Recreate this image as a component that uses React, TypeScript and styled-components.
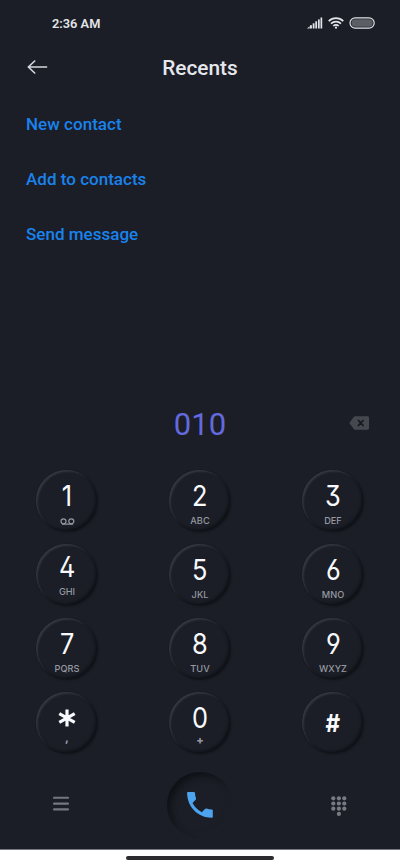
import React from "react";
import styled, { createGlobalStyle } from "styled-components";

const GlobalStyle = createGlobalStyle`
  *, *::before, *::after { box-sizing: border-box; }
  body { margin: 0; background: #1b1e26; }
  button { border: 0; padding: 0; margin: 0; background: none; font: inherit; color: inherit; }
  svg { display: block; }
`;

const Screen = styled.div`
  width: 400px;
  height: 866px;
  overflow: hidden;
  display: flex;
  flex-direction: column;
  background: #1b1e26;
  font-family: Roboto, "Liberation Sans", sans-serif;
`;

const StatusBar = styled.header`
  height: 46px;
  padding: 0 24px 0 52px;
  display: flex;
  justify-content: space-between;
  align-items: center;
  color: #e3e4e9;
`;

const Clock = styled.span`
  font-size: 12.8px;
  font-weight: 600;
  line-height: 16px;
  padding-top: 1px;
`;

const StatusIcons = styled.div`
  display: flex;
  align-items: center;
  gap: 5px;
`;

const TitleBar = styled.div`
  height: 44px;
  display: grid;
  grid-template-columns: 60px 1fr 60px;
  align-items: center;
`;

const BackButton = styled.button`
  padding-left: 27px;
  padding-bottom: 2px;
`;

const Title = styled.h1`
  margin: 0;
  font-size: 20.8px;
  font-weight: 460;
  line-height: 24px;
  text-align: center;
  color: #e6e7ec;
`;

const Actions = styled.nav`
  padding: 7px 26px 0;
  display: flex;
  flex-direction: column;
  align-items: flex-start;
`;

const ActionLink = styled.button`
  height: 54.7px;
  font-size: 17px;
  font-weight: 480;
  letter-spacing: 0.02px;
  color: #1a82ec;
`;

const NumberRow = styled.div`
  margin-top: auto;
  height: 50px;
  display: grid;
  grid-template-columns: 60px 1fr 60px;
  align-items: center;
`;

const DialedNumber = styled.output`
  text-align: center;
  font-size: 31px;
  line-height: 36px;
  color: #6469dd;
`;

const EraseButton = styled.button`
  padding: 0 0 4px 9px;
`;

const Keypad = styled.div`
  margin-top: 20px;
  padding: 0 37px 0 36px;
  display: grid;
  grid-template-columns: repeat(3, 61px);
  grid-auto-rows: 61px;
  justify-content: space-between;
  row-gap: 13px;
`;

const Key = styled.button<{ $lift?: number }>`
  display: flex;
  flex-direction: column;
  align-items: center;
  padding-left: 1px;
  padding-top: ${(p) => 12 - (p.$lift ?? 0)}px;
  border-radius: 50%;
  background: #1b1e26;
  box-shadow:
    inset 2px 2px 2px -0.5px #363940,
    inset -2px -2px 3px -1px #0d0f15,
    1px 1px 2px #101218;
  font-family: Inter, sans-serif;
`;

const Digit = styled.span<{ $bold?: boolean }>`
  height: 28px;
  line-height: 28px;
  font-size: ${(p) => (p.$bold ? 24 : 28.5)}px;
  font-weight: ${(p) => (p.$bold ? 700 : 370)};
  font-feature-settings: "ss01", "cv03", "cv04", "cv09";
  color: #f8f9fc;
  transform: scaleX(${(p) => (p.$bold ? 0.94 : 0.89)});
`;

const Letters = styled.span<{ $shift?: number }>`
  height: 12px;
  margin-top: ${(p) => 5 - (p.$shift ?? 0)}px;
  display: flex;
  align-items: center;
  font-size: ${(p) => (p.$shift ? 11 : 9.2)}px;
  font-weight: ${(p) => (p.$shift ? 800 : 500)};
  line-height: 12px;
  color: #9699a1;
`;

const BottomBar = styled.div`
  height: 96px;
  display: grid;
  grid-template-columns: 122px 1fr 122px;
  place-items: center;
  padding-top: 6px;
`;

const CallButton = styled.button`
  width: 66px;
  height: 66px;
  margin-top: 2px;
  display: grid;
  place-items: center;
  border-radius: 50%;
  box-shadow:
    inset 5px 5px 7px -2px #0e1014,
    inset -3px -3px 7px -3px #1e2129;
`;

const HomeArea = styled.footer`
  height: 17px;
  border-top: 1px solid #77787d;
  background: #fff;
  display: flex;
  justify-content: center;
  align-items: center;
`;

const HomeIndicator = styled.div`
  width: 148px;
  height: 4px;
  border-radius: 2px;
  background: #2b2b2e;
`;

const SignalIcon = () => (
  <svg width="16" height="12" viewBox="0 0 16 12" fill="currentColor">
    <path d="M.1 11.5 2.6 9.3v2.2Z" />
    <rect x="3" y="8.2" width="1.9" height="3.3" />
    <rect x="5.7" y="6.3" width="1.8" height="5.2" />
    <rect x="8.3" y="4.3" width="1.8" height="7.2" />
    <rect x="11" y="2.4" width="1.7" height="9.1" />
    <rect x="13.5" y="0.5" width="1.7" height="11" />
  </svg>
);

const WifiIcon = () => (
  <svg width="16" height="12" viewBox="0 0 16 12" fill="none" stroke="currentColor" strokeWidth="1.7">
    <path d="M0.7 4.1C4.8 .2 11.2 .2 15.3 4.1M3 6.6c2.8-2.7 7.2-2.7 10 0M5.3 9c1.5-1.4 3.9-1.4 5.4 0" />
    <circle cx="8" cy="10.7" r="1.1" fill="currentColor" stroke="none" />
  </svg>
);

const BatteryIcon = () => (
  <svg width="27" height="12" viewBox="0 0 27 12">
    <rect x="1" y="0.8" width="24.2" height="10.4" rx="5.2" fill="none" stroke="currentColor" strokeWidth="1.2" />
    <rect x="2.5" y="2.3" width="21.2" height="7.4" rx="3.7" fill="#5c5e66" />
  </svg>
);

const BackIcon = () => (
  <svg width="21" height="14" viewBox="0 0 21 14" fill="none" stroke="#d7d8de" strokeWidth="1.6" strokeLinecap="round" strokeLinejoin="round">
    <path d="M7.7 1 1.3 7l6.4 6M1.6 7h18" />
  </svg>
);

const EraseIcon = () => (
  <svg width="21" height="14" viewBox="0 0 21 14">
    <path d="M6 .3h12.6q1.4 0 1.4 1.4v10.6q0 1.4-1.4 1.4H6q-.8 0-1.3-.6L.7 7.6q-.4-.6 0-1.2L4.7.9Q5.2.3 6 .3Z" fill="#464850" />
    <path d="m9.4 4.4 4.8 5.2m0-5.2L9.4 9.6" stroke="#171a21" strokeWidth="1.6" strokeLinecap="round" />
  </svg>
);

const VoicemailIcon = () => (
  <svg width="15" height="7" viewBox="0 0 15 7" fill="none" stroke="currentColor" strokeWidth="1.2">
    <circle cx="3.5" cy="3.3" r="2.5" />
    <circle cx="11.3" cy="3.3" r="2.5" />
    <path d="M2 6.1h11" />
  </svg>
);

const MenuIcon = () => (
  <svg width="16" height="16" viewBox="0 0 16 16" stroke="#747780" strokeWidth="2.1" strokeLinecap="round">
    <path d="M1 1.8h14M1 7.6h14M1 13.4h14" />
  </svg>
);

const PhoneIcon = () => (
  <svg width="26" height="26" viewBox="0 0 26 26" fill="#4da4ee">
    <path d="M.1.8Q.1 0 .9 0H7q.8 0 .9.8.2 2.8 1.1 5.4.3.8-.3 1.5L5.5 11q3.2 6 9.3 9.2l3.2-3.2q.6-.6 1.5-.4 2.5.8 5.3 1 1 .1 1 1v6.2q0 1-1 1C11 25.8.1 15 .1.8Z" />
  </svg>
);

const dots: [number, number][] = [
  ...[2.3, 7.5, 12.7].flatMap((y) => [2.3, 7.9, 13.3].map((x): [number, number] => [x, y])),
  [7.9, 17.9],
];

const Dialpad = styled.svg`
  margin-top: 4px;
`;

const DialpadIcon = () => (
  <Dialpad width="16" height="21" viewBox="0 0 16 21" fill="#797b83">
    {dots.map(([x, y]) => (
      <circle key={`${x}-${y}`} cx={x} cy={y} r="2.1" />
    ))}
  </Dialpad>
);

const AsteriskIcon = () => (
  <svg width="18" height="18" viewBox="0 0 18 18" stroke="currentColor" strokeWidth="3.2">
    <path d="M9 .6v16.8M1.3 4.6l15.4 8.8M16.7 4.6 1.3 13.4" />
  </svg>
);

const AsteriskSlot = styled.span`
  height: 27px;
  padding-top: 1px;
  display: flex;
  align-items: center;
  color: #f8f9fc;
`;

const HashSlot = styled.span`
  display: flex;
  padding-top: 6px;
`;

type KeyData = { digit: string; letters?: React.ReactNode; lift?: number; bold?: boolean; shift?: number };

const keys: KeyData[] = [
  { digit: "1", letters: <VoicemailIcon /> },
  { digit: "2", letters: "ABC" },
  { digit: "3", letters: "DEF" },
  { digit: "4", letters: "GHI", lift: 3 },
  { digit: "5", letters: "JKL" },
  { digit: "6", letters: "MNO" },
  { digit: "7", letters: "PQRS" },
  { digit: "8", letters: "TUV" },
  { digit: "9", letters: "WXYZ" },
  { digit: "*", letters: ",", shift: 4 },
  { digit: "0", letters: "+", shift: 3 },
  { digit: "#", bold: true },
];

const KeyFace = ({ digit, bold }: KeyData) => {
  if (digit === "*") {
    return (
      <AsteriskSlot>
        <AsteriskIcon />
      </AsteriskSlot>
    );
  }
  if (bold) {
    return (
      <HashSlot>
        <Digit $bold>{digit}</Digit>
      </HashSlot>
    );
  }
  return <Digit>{digit}</Digit>;
};

export default function App() {
  return (
    <>
      <GlobalStyle />
      <Screen>
        <StatusBar>
          <Clock>2:36 AM</Clock>
          <StatusIcons>
            <SignalIcon />
            <WifiIcon />
            <BatteryIcon />
          </StatusIcons>
        </StatusBar>
        <TitleBar>
          <BackButton aria-label="Back">
            <BackIcon />
          </BackButton>
          <Title>Recents</Title>
        </TitleBar>
        <Actions>
          <ActionLink>New contact</ActionLink>
          <ActionLink>Add to contacts</ActionLink>
          <ActionLink>Send message</ActionLink>
        </Actions>
        <NumberRow>
          <span />
          <DialedNumber>010</DialedNumber>
          <EraseButton aria-label="Delete">
            <EraseIcon />
          </EraseButton>
        </NumberRow>
        <Keypad>
          {keys.map((k) => (
            <Key key={k.digit} $lift={k.lift}>
              <KeyFace {...k} />
              {k.letters && <Letters $shift={k.shift}>{k.letters}</Letters>}
            </Key>
          ))}
        </Keypad>
        <BottomBar>
          <MenuIcon />
          <CallButton aria-label="Call">
            <PhoneIcon />
          </CallButton>
          <DialpadIcon />
        </BottomBar>
        <HomeArea>
          <HomeIndicator />
        </HomeArea>
      </Screen>
    </>
  );
}
